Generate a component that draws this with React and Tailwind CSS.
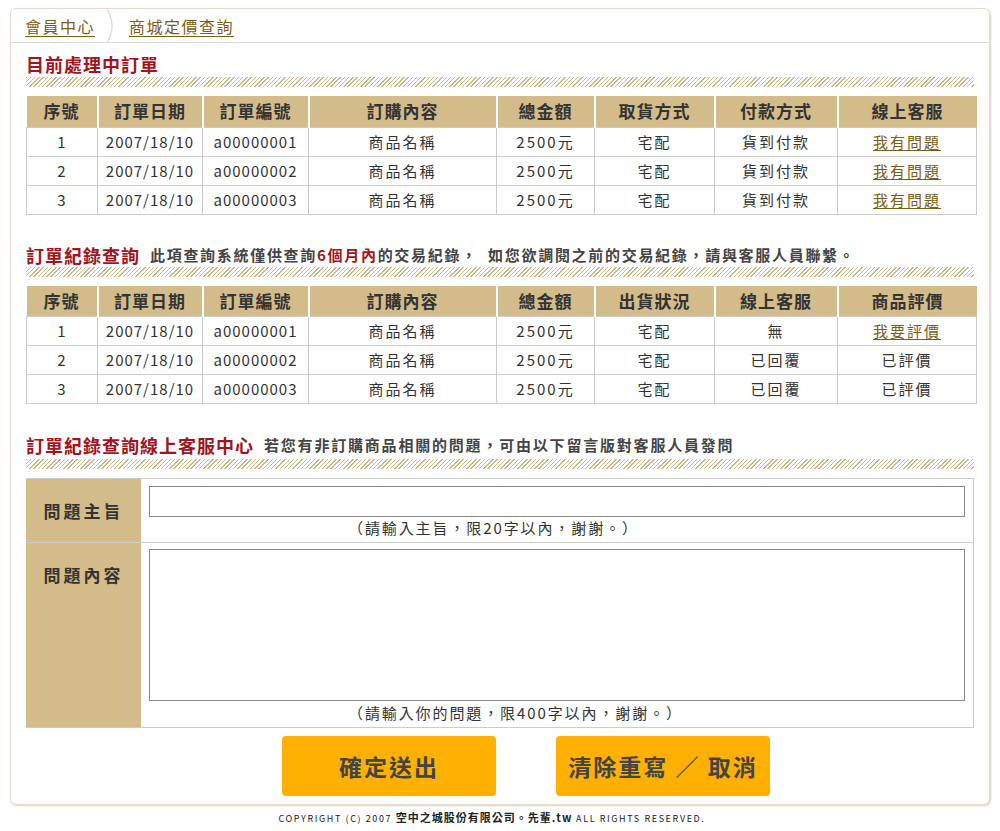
import React from "react";

const font = { fontFamily: '"Noto Sans CJK TC", "Noto Sans", sans-serif' };

const cols1 = ["序號", "訂單日期", "訂單編號", "訂購內容", "總金額", "取貨方式", "付款方式", "線上客服"];
const cols2 = ["序號", "訂單日期", "訂單編號", "訂購內容", "總金額", "出貨狀況", "線上客服", "商品評價"];
const widths = [71, 105, 106, 188, 98, 120, 123, 139];

const rows1 = [1, 2, 3].map(n => [String(n), "2007/18/10", `a0000000${n}`, "商品名稱", "2500元", "宅配", "貨到付款", { link: "我有問題" }]);
const rows2 = [
  ["1", "2007/18/10", "a00000001", "商品名稱", "2500元", "宅配", "無", { link: "我要評價" }],
  ["2", "2007/18/10", "a00000002", "商品名稱", "2500元", "宅配", "已回覆", "已評價"],
  ["3", "2007/18/10", "a00000003", "商品名稱", "2500元", "宅配", "已回覆", "已評價"],
];

function Stripe({ className = "" }) {
  return <div className={`h-[10px] bg-[repeating-linear-gradient(135deg,#cdb888_0px,#cdb888_1px,#ffffff_1px,#ffffff_3px)] ${className}`} />;
}

function OrderTable({ cols, rows }) {
  return (
    <table className="w-full table-fixed border-collapse mt-[9px]">
      <colgroup>
        {widths.map((w, i) => <col key={i} style={{ width: w }} />)}
      </colgroup>
      <thead>
        <tr className="bg-[#d3bc8a] h-[31px]">
          {cols.map((c, i) => (
            <th key={i} className={`p-0 text-[17px] leading-[20px] font-bold text-[#333] tracking-[1px] ${i > 0 ? "border-l-2 border-white" : ""}`}>{c}</th>
          ))}
        </tr>
      </thead>
      <tbody>
        {rows.map((r, ri) => (
          <tr key={ri} className="h-[29px]">
            {r.map((c, ci) => {
              const ascii = typeof c === "string" && /^[\x00-\x7f]+$/.test(c);
              return (
                <td key={ci} className={`p-0 border border-[#cccccc] text-center text-[15px] leading-[20px] text-[#333] ${ascii ? "tracking-[1px]" : "tracking-[2px]"}`}>
                  {typeof c === "string" ? c : <a href="#" className="text-[#7d5c14] underline underline-offset-2">{c.link}</a>}
                </td>
              );
            })}
          </tr>
        ))}
      </tbody>
    </table>
  );
}

function Heading({ title, children, className = "", subTracking = "tracking-[1.7px]" }) {
  return (
    <div className={`flex items-center h-[20px] ${className}`}>
      <span className="text-[18px] leading-[20px] font-bold text-[#a3141c] tracking-[1px]">{title}</span>
      {children && <span className={`ml-[10px] text-[15px] leading-[20px] font-bold text-[#444] ${subTracking}`}>{children}</span>}
    </div>
  );
}

export default function App() {
  return (
    <div className="bg-white min-h-[831px] pt-[8px]" style={font}>
      <div className="mx-[10px] w-[980px] border border-[#e3dacb] rounded-[6px] shadow-[1px_1px_2px_#ddd3bf] bg-white">
        <div className="h-[34px] flex items-center border-b border-[#dddddd] pl-[14px]">
          <a href="#" className="text-[16px] text-[#7d5c14] underline underline-offset-[3px] tracking-[1.5px]">會員中心</a>
          <svg width="22" height="34" viewBox="0 0 22 34" className="ml-[6px] mr-[6px]">
            <path d="M6 0 Q16 17 6 34" fill="none" stroke="#d8d8d8" strokeWidth="1.2" />
          </svg>
          <a href="#" className="text-[16px] text-[#7d5c14] underline underline-offset-[3px] tracking-[1.5px]">商城定價查詢</a>
        </div>

        <div className="px-[15px]">
          <Heading title="目前處理中訂單" className="mt-[11px]" />
          <Stripe className="mt-[3px]" />
          <OrderTable cols={cols1} rows={rows1} />

          <Heading title="訂單紀錄查詢" className="mt-[30px]">
            此項查詢系統僅供查詢<span className="text-[#a3141c]">6個月內</span>的交易紀錄，&nbsp;&nbsp;如您欲調閱之前的交易紀錄，請與客服人員聯繫。
          </Heading>
          <Stripe className="mt-[2px]" />
          <OrderTable cols={cols2} rows={rows2} />

          <Heading title="訂單紀錄查詢線上客服中心" className="mt-[31px]" subTracking="tracking-[1.8px]">
            若您有非訂購商品相關的問題，可由以下留言版對客服人員發問
          </Heading>
          <Stripe className="mt-[4px]" />

          <div className="mt-[9px] border border-[#cccccc] border-l-0">
            <div className="flex h-[64px] border-b border-[#cccccc]">
              <div className="w-[115px] bg-[#d3bc8a] flex items-center justify-center text-[17px] font-bold text-[#333] tracking-[3px]">問題主旨</div>
              <div className="flex-1 px-[8px] pt-[7px] flex flex-col">
                <input className="h-[31px] w-full border border-[#888888] outline-none" />
                <div className="pl-[199px] text-[15px] leading-[20px] text-[#333] mt-[1px] tracking-[1.9px]">（請輸入主旨，限20字以內，謝謝。）</div>
              </div>
            </div>
            <div className="flex h-[184px]">
              <div className="w-[115px] bg-[#d3bc8a] flex justify-center pt-[19px] text-[17px] font-bold text-[#333] tracking-[3px]">問題內容</div>
              <div className="flex-1 px-[8px] pt-[6px] flex flex-col">
                <textarea className="h-[152px] w-full border border-[#888888] outline-none resize-none" />
                <div className="pl-[199px] text-[15px] leading-[20px] text-[#333] mt-[2px] tracking-[1.9px]">（請輸入你的問題，限400字以內，謝謝。）</div>
              </div>
            </div>
          </div>

          <div className="flex justify-center gap-[60px] mt-[8px] pb-[8px] pl-[52px]">
            <button className="w-[214px] h-[60px] bg-[#ffb000] rounded-[4px] text-[23px] font-bold text-[#444] tracking-[2px]">確定送出</button>
            <button className="w-[214px] h-[60px] bg-[#ffb000] rounded-[4px] text-[23px] font-bold text-[#444] tracking-[2px]">清除重寫 ／ 取消</button>
          </div>
        </div>
      </div>

      <div className="text-center mt-[5px] text-[9px] leading-[14px] text-[#222] tracking-[1.6px] pr-[16px]">
        COPYRIGHT (C) 2007 <span className="text-[11px] font-bold tracking-[1px]">空中之城股份有限公司。先輩.tw</span> ALL RIGHTS RESERVED.
      </div>
    </div>
  );
}
